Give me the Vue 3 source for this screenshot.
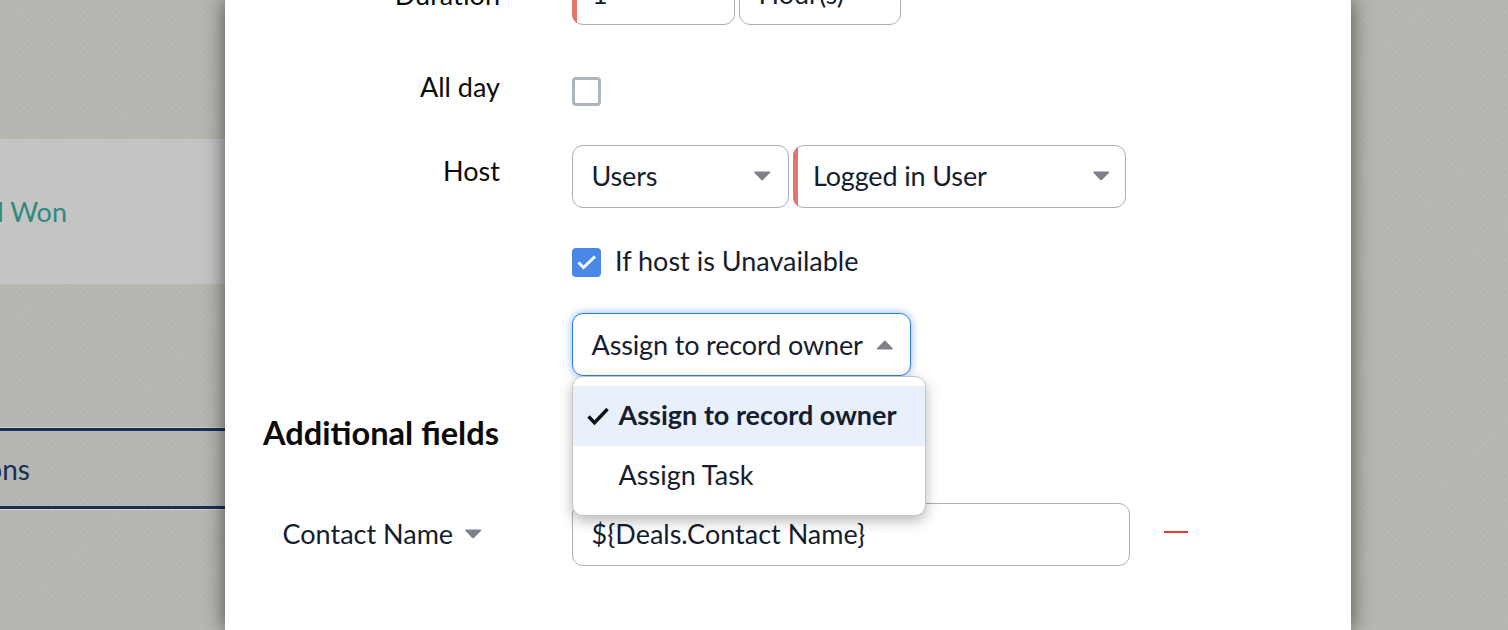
<script setup>
const caretDown = 'M1 .5h14.5c.8 0 1.1.7.6 1.2L8.9 8.9c-.5.5-1.2.5-1.7 0L.4 1.7C-.1 1.2.2.5 1 .5z'
</script>

<template>
  <div class="page">
    <div class="backdrop">
      <div class="band"><span class="won">Closed Won</span></div>
      <div class="nav"><span class="nav-text">Automations</span></div>
    </div>

    <section class="modal">
      <div class="form">
        <div class="row row-duration">
          <label class="label">Duration</label>
          <div class="controls">
            <div class="field required w-163"><span>1</span></div>
            <div class="field w-162"><span>Hour(s)</span></div>
          </div>
        </div>

        <div class="row row-allday">
          <label class="label">All day</label>
          <div class="controls"><span class="check"></span></div>
        </div>

        <div class="row row-host">
          <label class="label">Host</label>
          <div class="controls">
            <div class="field select w-217">
              <span>Users</span>
              <svg class="caret" width="17" height="10" viewBox="0 0 17 10"><path :d="caretDown" /></svg>
            </div>
            <div class="field select required w-333">
              <span>Logged in User</span>
              <svg class="caret" width="17" height="10" viewBox="0 0 17 10"><path :d="caretDown" /></svg>
            </div>
          </div>
        </div>

        <div class="row row-unavailable">
          <span></span>
          <div class="controls check-line">
            <span class="check checked">
              <svg width="23" height="23" viewBox="0 0 23 23"><path d="M3.5 11.5l5 5L20 5.5" fill="none" stroke="#fff" stroke-width="3" /></svg>
            </span>
            <span class="check-text">If host is Unavailable</span>
          </div>
        </div>

        <div class="row row-assign">
          <span></span>
          <div class="assign-wrap">
            <div class="field select focused w-339">
              <span>Assign to record owner</span>
              <svg class="caret up" width="17" height="10" viewBox="0 0 17 10"><path :d="caretDown" /></svg>
            </div>
            <ul class="menu">
              <li class="option active">
                <svg class="tick" width="24" height="20" viewBox="0 0 24 20"><path d="M2.5 10.5l6 6.2L21.5 3" fill="none" stroke="#0d0f14" stroke-width="3.4" /></svg>
                Assign to record owner
              </li>
              <li class="option">Assign Task</li>
            </ul>
          </div>
        </div>

        <h2 class="heading">Additional fields</h2>

        <div class="row row-contact">
          <div class="contact-label">
            <span>Contact Name</span>
            <svg class="caret" width="17" height="10" viewBox="0 0 17 10"><path :d="caretDown" /></svg>
          </div>
          <div class="controls contact-controls">
            <div class="field w-558"><span>${Deals.Contact Name}</span></div>
            <span class="minus"></span>
          </div>
        </div>
      </div>
    </section>
  </div>
</template>

<style>
html, body { margin: 0; overflow: hidden; }
</style>

<style scoped>
.page {
  position: relative;
  width: 1508px;
  height: 630px;
  overflow: hidden;
  font-family: Lato, "Open Sans", sans-serif;
  font-size: 27px;
  color: #161d2e;
  background-color: #b7b6b0;
  background-image:
    repeating-linear-gradient(45deg, rgba(255,255,255,.022) 0 2px, transparent 2px 5px),
    repeating-linear-gradient(-45deg, rgba(0,0,0,.012) 0 2px, transparent 2px 5px);
}
.backdrop { padding-top: 139px; }
.band {
  height: 145px;
  width: 225px;
  background: #c4c4c4;
  display: flex;
  align-items: center;
  justify-content: flex-end;
  overflow: hidden;
  white-space: nowrap;
}
.won { color: #2f8a7c; margin-right: 158px; }
.nav {
  box-sizing: border-box;
  margin-top: 144px;
  height: 81px;
  width: 225px;
  border-top: 3px solid #1a2f55;
  border-bottom: 3px solid #1a2f55;
  box-shadow: 0 -1px 0 #d0cfc8, 0 1px 0 #d0cfc8;
  display: flex;
  align-items: center;
  justify-content: flex-end;
  overflow: hidden;
  white-space: nowrap;
}
.nav-text { color: #1a2f55; margin-right: 195px; font-size: 28px; }

.modal {
  position: absolute;
  left: 225px;
  top: 0;
  width: 1126px;
  height: 630px;
  background: #fff;
  box-shadow: 0 0 20px rgba(0,0,0,.6);
}
.form { margin-top: -38px; }

.row { display: grid; grid-template-columns: 274px 1fr; column-gap: 73px; }
.label {
  text-align: right;
  color: #0b0b0b;
  line-height: 34px;
  padding-top: 9px;
  margin-right: -1px;
}
.controls { display: flex; gap: 4px; }

.row-duration { height: 63px; }
.row-duration .label { padding-top: 16px; }
.row-duration .field { padding-bottom: 0; }
.row-allday { margin-top: 52px; height: 29px; }
.row-allday .label { padding-top: 0; margin-top: -7px; }
.row-host { margin-top: 39px; height: 63px; }
.row-unavailable { margin-top: 40px; height: 29px; }
.row-assign { margin-top: 36px; height: 63px; }

.field {
  box-sizing: border-box;
  height: 63px;
  border: 1px solid #a9b0ba;
  border-radius: 11px;
  background: #fff;
  display: flex;
  align-items: center;
  justify-content: space-between;
  padding: 0 17px 2px 18.5px;
  position: relative;
  color: #161d2e;
  white-space: nowrap;
}
.select > span { letter-spacing: -0.14px; }
.w-163 { width: 163px; }
.w-162 { width: 162px; }
.w-217 { width: 217px; }
.w-333 { width: 333px; }
.w-339 { width: 339px; }
.w-558 { width: 558px; }
.required { padding-left: 19px; padding-right: 15px; }
.required::before {
  content: "";
  position: absolute;
  inset: -1px;
  border-radius: 11px;
  background: linear-gradient(to right, #e5756a 5px, transparent 5px);
  pointer-events: none;
}
.focused {
  border-color: #2f7fe8;
  box-shadow: 0 0 8px rgba(66,133,244,.6);
  padding-bottom: 0;
}
.caret { fill: #7e808c; flex: none; }
.caret.up { transform: rotate(180deg); }

.check {
  box-sizing: border-box;
  display: block;
  width: 29px;
  height: 29px;
  border: 3px solid #adb5bd;
  border-radius: 4px;
  background: #fff;
}
.check.checked {
  background: #4a88e8;
  border-color: #4a88e8;
  display: flex;
  align-items: center;
  justify-content: center;
}
.check.checked svg { flex: none; }
.check-line { align-items: center; gap: 14px; }
.check-text { color: #161d2e; margin-top: -4px; }

.assign-wrap { position: relative; }
.menu {
  position: absolute;
  left: 0;
  top: 63px;
  z-index: 3;
  box-sizing: border-box;
  width: 354px;
  height: 140px;
  margin: 0;
  padding: 9px 0;
  list-style: none;
  background: #fff;
  border: 1px solid #c4c4c4;
  border-radius: 11px;
  box-shadow: 0 5px 14px rgba(0,0,0,.28);
}
.option {
  box-sizing: border-box;
  height: 60px;
  display: flex;
  align-items: center;
  padding: 0 0 4px 45.5px;
  position: relative;
  color: #161d2e;
}
.option.active { background: #e7f0fb; font-weight: 700; }
.tick { position: absolute; left: 13px; top: 20px; }

.heading {
  margin: 38px 0 0 37px;
  font-size: 32.6px;
  line-height: 38px;
  font-weight: 700;
  color: #0b0b0b;
  width: 237px;
  text-align: right;
  white-space: nowrap;
}
.row-contact { margin-top: 51px; height: 63px; }
.contact-label {
  display: flex;
  align-items: center;
  gap: 12px;
  padding: 0 0 2px 57.5px;
  color: #161d2e;
  white-space: nowrap;
  height: 63px;
  box-sizing: border-box;
}
.contact-controls { align-items: center; gap: 34px; }
.minus { display: block; width: 24px; height: 2px; background: #f0372e; margin-top: -5px; }
</style>
